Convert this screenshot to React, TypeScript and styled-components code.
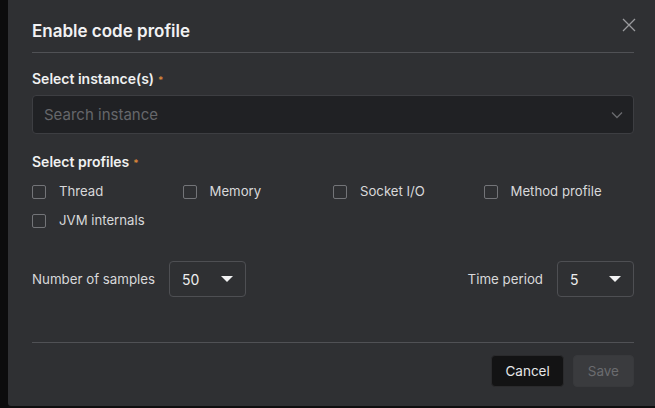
import React from "react";
import styled, { createGlobalStyle } from "styled-components";

const GlobalStyle = createGlobalStyle`
  html, body {
    margin: 0;
    padding: 0;
    background: #0e0e0f;
    font-family: Inter, "Noto Sans", sans-serif;
  }
`;

const Page = styled.div`
  width: 655px;
  height: 408px;
  display: flex;
  background: #0e0e0f;
  overflow: hidden;
`;

const Backdrop = styled.div`
  width: 8px;
  flex-shrink: 0;
  background: #0c0c0d;
`;

const Modal = styled.div`
  flex: 1;
  height: 406px;
  background: #2f3033;
  border-bottom-left-radius: 3px;
  padding: 0 21px 0 24px;
  box-sizing: border-box;
  display: flex;
  flex-direction: column;
  color: #e4e4e6;
`;

const Header = styled.div`
  height: 52px;
  display: flex;
  align-items: center;
  justify-content: space-between;
  border-bottom: 1px solid #505155;
`;

const Title = styled.h2`
  margin: 0;
  padding-top: 9px;
  font-size: 17px;
  font-weight: 600;
  color: #f2f2f3;
`;

const Close = styled.button`
  background: none;
  border: none;
  padding: 0;
  margin: -2px -2px 0 0;
  width: 14px;
  height: 14px;
  display: flex;
  color: #9a9b9e;
`;

const Label = styled.div<{ $top: number }>`
  font-size: 14px;
  font-weight: 600;
  color: #f0f0f1;
  margin-top: ${(p) => p.$top}px;
  display: flex;
  align-items: center;
  gap: 4px;
`;

const Star = styled.span`
  color: #d9843a;
  font-size: 10px;
  line-height: 1;
  padding-top: 2px;
`;

const Search = styled.div`
  margin-top: 8px;
  height: 39px;
  box-sizing: border-box;
  background: #202124;
  border: 1px solid #3d3e42;
  border-radius: 4px;
  display: flex;
  align-items: center;
  justify-content: space-between;
  padding: 0 10px 0 11px;
  font-size: 15px;
  color: #66676b;
`;

const Grid = styled.div`
  margin-top: 11px;
  display: grid;
  grid-template-columns: repeat(4, 150.5px);
  row-gap: 10px;
`;

const Option = styled.label`
  display: flex;
  align-items: center;
  gap: 13px;
  font-size: 13.2px;
  color: #d8d8da;
  height: 19px;
`;

const Box = styled.span`
  width: 12px;
  height: 12px;
  border: 1.5px solid #737478;
  border-radius: 2px;
  margin-top: 2px;
`;

const SampleRow = styled.div`
  margin-top: 32px;
  display: flex;
  align-items: center;
  justify-content: space-between;
`;

const Field = styled.div`
  display: flex;
  align-items: center;
  gap: 14px;
  font-size: 13.3px;
  color: #d8d8da;
`;

const Select = styled.div`
  width: 77px;
  height: 36px;
  box-sizing: border-box;
  border: 1px solid #4e4f53;
  border-radius: 4px;
  display: flex;
  align-items: center;
  justify-content: space-between;
  padding: 0 12px 0 12px;
  font-size: 14px;
  color: #eeeeef;
`;

const Caret = styled.span`
  width: 0;
  height: 0;
  border-left: 6px solid transparent;
  border-right: 6px solid transparent;
  border-top: 6px solid #f2f2f3;
`;

const Footer = styled.div`
  margin-top: 45px;
  border-top: 1px solid #505155;
  padding-top: 12px;
  display: flex;
  justify-content: flex-end;
  gap: 9px;
`;

const Button = styled.button<{ $primary?: boolean }>`
  height: 32px;
  padding: 0 ${(p) => (p.$primary ? 14 : 13)}px;
  border-radius: 4px;
  font-family: inherit;
  font-size: 13.5px;
  border: 1px solid ${(p) => (p.$primary ? "#38393c" : "#2a2a2c")};
  background: ${(p) => (p.$primary ? "#3a3b3e" : "#131314")};
  color: ${(p) => (p.$primary ? "#6a6b6f" : "#e6e6e8")};
`;

const profiles = ["Thread", "Memory", "Socket I/O", "Method profile", "JVM internals"];

export default function App() {
  return (
    <Page>
      <GlobalStyle />
      <Backdrop />
      <Modal>
        <Header>
          <Title>Enable code profile</Title>
          <Close aria-label="close">
            <svg width="14" height="14" viewBox="0 0 14 14" fill="none" stroke="currentColor" strokeWidth="1.3">
              <path d="M1 1l12 12M13 1L1 13" />
            </svg>
          </Close>
        </Header>

        <Label $top={17}>
          Select instance(s) <Star>*</Star>
        </Label>
        <Search>
          <span>Search instance</span>
          <svg width="12" height="8" viewBox="0 0 12 8" fill="none" stroke="#6a6b6f" strokeWidth="1.3">
            <path d="M1 1.5l5 5 5-5" />
          </svg>
        </Search>

        <Label $top={19}>
          Select profiles <Star>*</Star>
        </Label>
        <Grid>
          {profiles.map((p) => (
            <Option key={p}>
              <Box />
              {p}
            </Option>
          ))}
        </Grid>

        <SampleRow>
          <Field>
            Number of samples
            <Select>
              50
              <Caret />
            </Select>
          </Field>
          <Field>
            Time period
            <Select>
              5
              <Caret />
            </Select>
          </Field>
        </SampleRow>

        <Footer>
          <Button>Cancel</Button>
          <Button $primary disabled>
            Save
          </Button>
        </Footer>
      </Modal>
    </Page>
  );
}
